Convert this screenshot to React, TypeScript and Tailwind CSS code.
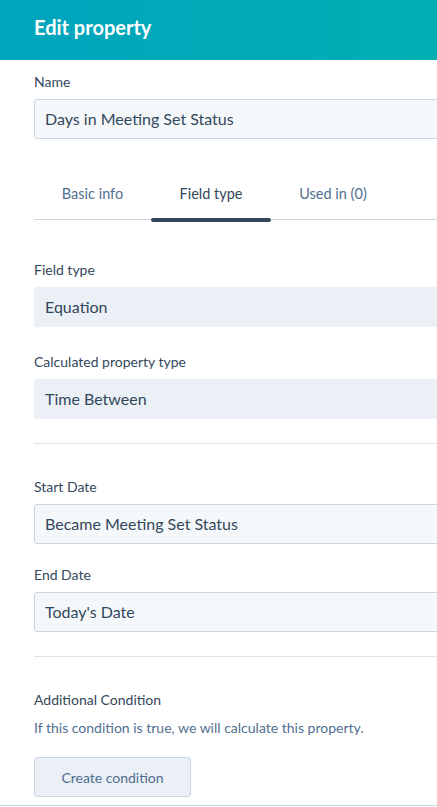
import React from "react";

const Label = ({ children, className = "" }: { children: React.ReactNode; className?: string }) => (
  <div className={`text-[14px] leading-[20px] text-[#33475b] ${className}`}>{children}</div>
);

const Input = ({ value }: { value: string }) => (
  <div className="h-[40px] flex items-center px-[10px] bg-[#f5f8fa] border border-[#cbd6e2] rounded-[3px] text-[16px] text-[#33475b]">
    {value}
  </div>
);

const ReadOnly = ({ value }: { value: string }) => (
  <div className="h-[40px] flex items-center px-[11px] bg-[#eaf0f6] rounded-[3px] text-[16px] text-[#33475b]">
    {value}
  </div>
);

const tabs = [
  { label: "Basic info", w: "w-[117px]" },
  { label: "Field type", w: "w-[120px]" },
  { label: "Used in (0)", w: "w-[124px]" },
];

export default function App() {
  const active = 1;

  return (
    <div className="w-[437px] h-[807px] overflow-hidden bg-white font-['Lato',sans-serif]">
      {/* header */}
      <div className="h-[60px] flex items-center px-[34px] bg-gradient-to-r from-[#00a4bd] to-[#00afb2]">
        <h1 className="text-[20px] font-bold text-white leading-none -mt-[7px]">Edit property</h1>
      </div>

      <div className="w-[520px] pl-[34px]">
        <Label className="mt-[12px] mb-[7px]">Name</Label>
        <Input value="Days in Meeting Set Status" />

        {/* tabs */}
        <div className="mt-[45px] flex border-b border-[#cbd6e2]">
          {tabs.map((t, i) => (
            <div
              key={t.label}
              className={`relative ${t.w} text-center pb-[15px] text-[14.5px] leading-[20px] ${
                i === active ? "text-[#33475b]" : "text-[#516f90]"
              }`}
            >
              {t.label}
              {i === active && (
                <div className="absolute left-0 right-0 -bottom-[3px] h-[4px] rounded-full bg-[#33475b]" />
              )}
            </div>
          ))}
        </div>

        <Label className="mt-[40px] mb-[7px]">Field type</Label>
        <ReadOnly value="Equation" />

        <Label className="mt-[25px] mb-[7px]">Calculated property type</Label>
        <ReadOnly value="Time Between" />

        <div className="mt-[24px] border-t border-[#dfe3eb]" />

        <Label className="mt-[33px] mb-[7px]">Start Date</Label>
        <Input value="Became Meeting Set Status" />

        <Label className="mt-[21px] mb-[7px]">End Date</Label>
        <Input value="Today's Date" />

        <div className="mt-[24px] border-t border-[#dfe3eb]" />

        <Label className="mt-[33px]">Additional Condition</Label>
        <div className="mt-[8px] text-[14px] leading-[20px] text-[#516f90]">
          If this condition is true, we will calculate this property.
        </div>
        <button className="mt-[19px] w-[157px] h-[40px] bg-[#eaf0f6] border border-[#cbd6e2] rounded-[3px] text-[14px] text-[#506e91]">
          Create condition
        </button>
      </div>

      <div className="mt-[8px] border-t border-[#cbd6e2]" />
    </div>
  );
}
